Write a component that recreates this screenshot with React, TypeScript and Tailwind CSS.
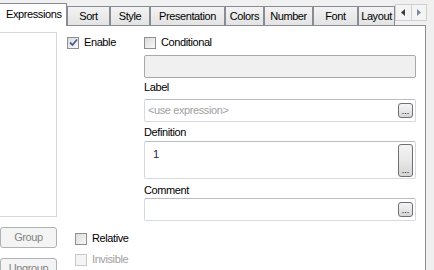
import React from "react";

const font = { fontFamily: '"Liberation Sans", Arial, sans-serif' };

type TabProps = { label: string; width: string; selected?: boolean };

function Tab({ label, width, selected }: TabProps) {
  if (selected) {
    return (
      <div
        className={`${width} relative z-10 -mb-px flex h-[23px] shrink-0 items-start whitespace-nowrap border-r border-t border-[#898c95] bg-white pl-[6px] pt-[4px] text-[11px] leading-[13px] text-black`}
      >
        {label}
      </div>
    );
  }
  return (
    <div
      className={`${width} flex h-[19px] shrink-0 items-start justify-center overflow-hidden whitespace-nowrap border-l border-t border-r border-[#898c95] bg-gradient-to-b from-[#f3f3f3] to-[#e3e3e3] pt-[3px] text-[11px] leading-[13px] text-black`}
    >
      {label}
    </div>
  );
}

function Checkbox({ checked, disabled }: { checked?: boolean; disabled?: boolean }) {
  return (
    <span
      className={`flex h-[12px] w-[12px] shrink-0 items-center justify-center border ${
        disabled ? "border-[#c8c8c8] bg-[#f4f4f4]" : "border-[#8e8f8f] bg-gradient-to-br from-[#dcdcdc] to-[#f8f8f8]"
      }`}
    >
      {checked && (
        <svg width="9" height="9" viewBox="0 0 9 9">
          <path d="M1 4.5 L3.5 7 L8 1.5" fill="none" stroke="#4a5f97" strokeWidth="1.8" />
        </svg>
      )}
    </span>
  );
}

function DotsButton({ tall }: { tall?: boolean }) {
  return (
    <div
      className={`flex w-[15px] shrink-0 flex-col items-center justify-end rounded-[3px] border border-[#707070] bg-gradient-to-b from-[#f4f4f4] via-[#e8e8e8] to-[#d4d4d4] pb-[1px] text-[9px] leading-[9px] tracking-normal text-black ${
        tall ? "h-[33px]" : "h-[15px]"
      }`}
    >
      ...
    </div>
  );
}

export default function App() {
  return (
    <div className="flex h-[270px] w-[434px] flex-col overflow-hidden bg-[#f0f0f0] tracking-[-0.4px]" style={font}>
      {/* tab strip */}
      <div className="flex h-[25px] shrink-0 items-end">
        <Tab label="Expressions" width="w-[67px]" selected />
        <Tab label="Sort" width="w-[43px]" />
        <Tab label="Style" width="w-[40px]" />
        <Tab label="Presentation" width="w-[75px]" />
        <Tab label="Colors" width="w-[39px]" />
        <Tab label="Number" width="w-[49px]" />
        <Tab label="Font" width="w-[45px]" />
        <Tab label="Layout" width="w-[37px]" />
        <div className="mb-[4px] flex h-[17px] w-[32px] shrink-0 self-end border border-[#d0d0d0] bg-[#f4f4f4]">
          <div className="flex flex-1 items-center justify-center border-r border-[#d0d0d0]">
            <svg width="4" height="7" viewBox="0 0 4 7">
              <path d="M4 0 L0 3.5 L4 7 Z" fill="#3c3c3c" />
            </svg>
          </div>
          <div className="flex flex-1 items-center justify-center">
            <svg width="4" height="7" viewBox="0 0 4 7">
              <path d="M0 0 L4 3.5 L0 7 Z" fill="#7a8aa6" />
            </svg>
          </div>
        </div>
      </div>

      {/* page */}
      <div className="flex h-[245px] w-[426px] shrink-0 border-r border-t border-[#898c95] bg-white text-[11px] leading-[13px] text-black">
        {/* left column */}
        <div className="flex w-[57px] shrink-0 flex-col pt-[6px]">
          <div className="h-[185px] shrink-0 border-b border-r border-t border-[#d6d9dd] bg-white" />
          <div className="mt-[10px] flex h-[21px] shrink-0 items-center justify-center rounded-[3px] border border-[#adb2b5] bg-[#f4f4f4] text-[#838383]">
            Group
          </div>
          <div className="mt-[10px] flex h-[21px] shrink-0 items-center justify-center rounded-[3px] border border-[#adb2b5] bg-[#f4f4f4] text-[#838383]">
            Ungroup
          </div>
        </div>

        {/* middle column */}
        <div className="flex w-[87px] shrink-0 flex-col pl-[10px] pt-[10px]">
          <div className="flex h-[13px] items-center gap-[5px]">
            <Checkbox checked />
            <span>Enable</span>
          </div>
          <div className="ml-[8px] mt-[183px] flex h-[13px] items-center gap-[5px]">
            <Checkbox />
            <span>Relative</span>
          </div>
          <div className="ml-[8px] mt-[8px] flex h-[13px] items-center gap-[5px] text-[#a0a0a0]">
            <Checkbox disabled />
            <span>Invisible</span>
          </div>
        </div>

        {/* right column */}
        <div className="flex w-[272px] shrink-0 flex-col pt-[10px]">
          <div className="flex h-[13px] items-center gap-[5px]">
            <Checkbox />
            <span>Conditional</span>
          </div>
          <div className="mt-[6px] h-[23px] rounded-[2px] border border-[#a8a8a8] bg-[#f0f0f0]" />

          <div className="mt-[3px]">Label</div>
          <div className="mt-[5px] flex h-[23px] items-center justify-between rounded-[2px] border border-[#d5dae1] border-t-[#b9bdc4] pl-[3px] pr-[2px]">
            <span className="text-[#a0a0a0]">&lt;use expression&gt;</span>
            <DotsButton />
          </div>

          <div className="mt-[4px]">Definition</div>
          <div className="mt-[2px] flex h-[38px] items-start justify-between rounded-[2px] border border-[#d5dae1] border-t-[#b9bdc4] pl-[8px] pr-[2px] pt-[2px]">
            <span className="pt-[4px] text-[#1a1a60]">1</span>
            <DotsButton tall />
          </div>

          <div className="mt-[5px]">Comment</div>
          <div className="mt-[1px] flex h-[23px] items-center justify-end rounded-[2px] border border-[#d5dae1] border-t-[#b9bdc4] pr-[2px]">
            <DotsButton />
          </div>
        </div>
      </div>
    </div>
  );
}
